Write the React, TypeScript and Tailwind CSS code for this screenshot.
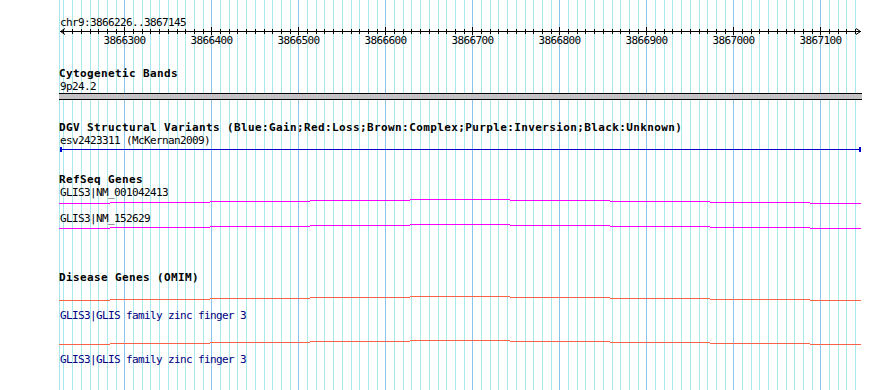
import React from "react";

const START = 3866226;
const END = 3867145;
const LEFT = 59;
const RIGHT = 861;

// bp -> pixel (measured: 3866300 @ 124.3, 3867100 @ 820.3)
const px = (bp: number) => 124.3 + (bp - 3866300) * 0.87;

const minorTicks: number[] = [];
for (let bp = 3866230; bp <= END; bp += 10) minorTicks.push(bp);
const majorTicks = minorTicks.filter((bp) => bp % 100 === 0);

// a transcript line is drawn as 100px steps forming a shallow arc
const steps = [
  [59, 110, 3],
  [110, 210, 2],
  [210, 310, 1],
  [310, 410, 0],
  [410, 510, -1],
  [510, 610, 0],
  [610, 710, 1],
  [710, 810, 2],
  [810, 861, 3],
];

function Arc({ y, color }: { y: number; color: string }) {
  return (
    <g fill={color}>
      {steps.map(([a, b, o]) => (
        <rect key={a} x={a} y={y + o} width={b - a} height={1} />
      ))}
    </g>
  );
}

function Title({ y, children }: { y: number; children: React.ReactNode }) {
  return (
    <text x={59} y={y} className="font-bold text-[11px] tracking-[0.38px]" fill="#000">
      {children}
    </text>
  );
}

function Label({ y, color = "#000", children }: { y: number; color?: string; children: React.ReactNode }) {
  return (
    <text x={60} y={y} className="text-[11px] tracking-[-0.62px]" fill={color}>
      {children}
    </text>
  );
}

export default function App() {
  return (
    <div className="w-[890px] h-[390px] bg-white overflow-hidden">
      <svg
        width={890}
        height={390}
        className="block font-['DejaVu_Sans_Mono',monospace]"
        shapeRendering="crispEdges"
      >
        {/* grid */}
        <line x1={59.5} y1={0} x2={59.5} y2={390} stroke="#a8e8ee" />
        {minorTicks.map((bp) => {
          const x = Math.round(px(bp)) + 0.5;
          const major = bp % 100 === 0;
          return (
            <line key={bp} x1={x} y1={0} x2={x} y2={390} stroke={major ? "#88c4ec" : "#a8e8ee"} />
          );
        })}

        {/* ruler */}
        <text x={60} y={26} className="text-[11px] tracking-[-0.62px]" fill="#000">
          chr9:{START}..{END}
        </text>
        <g stroke="#000">
          <line x1={60} y1={31.5} x2={861} y2={31.5} />
          <polyline points="65,28.5 60.5,31.5 65,34.5" fill="none" shapeRendering="auto" />
          <polyline points="856,28.5 860.5,31.5 856,34.5" fill="none" shapeRendering="auto" />
          {minorTicks.map((bp) => {
            const x = Math.round(px(bp)) + 0.5;
            const major = bp % 100 === 0;
            return <line key={bp} x1={x} y1={major ? 27 : 29} x2={x} y2={major ? 35 : 34} />;
          })}
        </g>
        {majorTicks.map((bp) => (
          <text
            key={bp}
            x={Math.round(px(bp)) + 0.5}
            y={44}
            textAnchor="middle"
            className="text-[11px] tracking-[-0.62px]"
            fill="#000"
          >
            {bp}
          </text>
        ))}

        {/* cytogenetic bands */}
        <Title y={77}>Cytogenetic Bands</Title>
        <Label y={90}>9p24.2</Label>
        <rect x={LEFT} y={93} width={RIGHT - LEFT + 1} height={7} fill="#000" />
        <rect x={LEFT} y={94} width={RIGHT - LEFT + 1} height={5} fill="#c4c2c4" />

        {/* DGV */}
        <Title y={131}>
          DGV Structural Variants (Blue:Gain;Red:Loss;Brown:Complex;Purple:Inversion;Black:Unknown)
        </Title>
        <Label y={144}>esv2423311 (McKernan2009)</Label>
        <rect x={60} y={149} width={801} height={1} fill="#0000cc" />
        <rect x={60} y={147} width={2} height={5} fill="#0000cc" />
        <rect x={859} y={147} width={2} height={5} fill="#0000cc" />

        {/* RefSeq */}
        <Title y={183}>RefSeq Genes</Title>
        <Label y={196}>GLIS3|NM_001042413</Label>
        <Arc y={200} color="#ff00ff" />
        <Label y={222}>GLIS3|NM_152629</Label>
        <Arc y={225} color="#ff00ff" />

        {/* OMIM */}
        <Title y={281}>Disease Genes (OMIM)</Title>
        <Arc y={297} color="#ff6347" />
        <Label y={319} color="#000080">GLIS3|GLIS family zinc finger 3</Label>
        <Arc y={341} color="#ff6347" />
        <Label y={363} color="#000080">GLIS3|GLIS family zinc finger 3</Label>
      </svg>
    </div>
  );
}
